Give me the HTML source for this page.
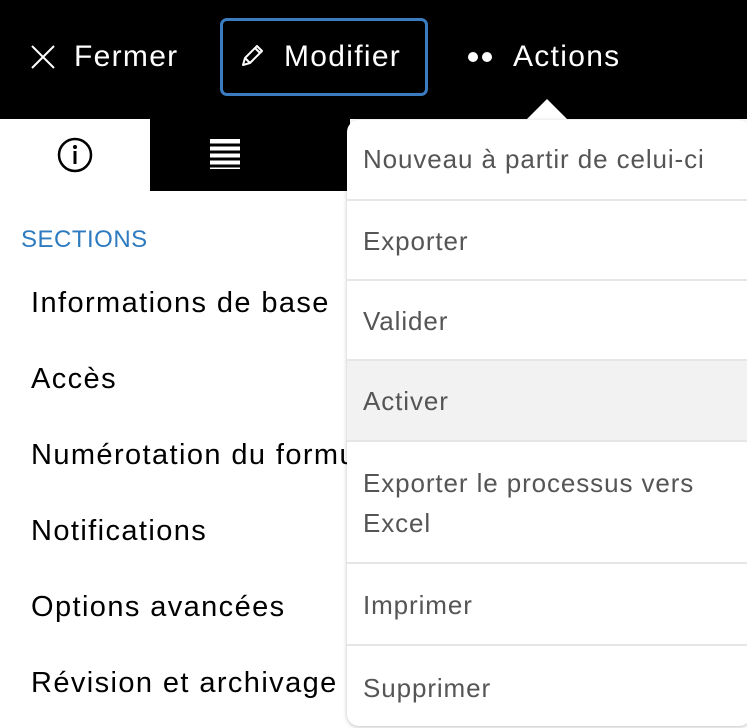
<!DOCTYPE html>
<html><head><meta charset="utf-8"><style>
*{margin:0;padding:0;box-sizing:border-box}
body{width:747px;height:728px;overflow:hidden;background:#fff;font-family:"Liberation Sans","DejaVu Sans",sans-serif;position:relative}
.hdr{position:absolute;left:0;top:0;width:747px;height:119px;background:#000}
.ht{position:absolute;color:#fff;font-size:30px;top:39px;line-height:36px;letter-spacing:1.3px}
.mod{position:absolute;left:220px;top:18px;width:208px;height:78px;border:3px solid #3b7cc0;border-radius:7px}
.tab1{position:absolute;left:0;top:119px;width:150px;height:72px;background:#fff}
.tab2{position:absolute;left:150px;top:119px;width:200px;height:72px;background:#000}
.sec{position:absolute;left:21px;top:226px;color:#2e7bbf;font-size:24px;letter-spacing:0.5px}
.si{position:absolute;left:31px;font-size:29px;color:#000;white-space:nowrap;letter-spacing:1.4px}
.menu{position:absolute;left:347px;top:120px;width:404px;height:606px;background:#fff;border-radius:12px;box-shadow:0 1px 4px rgba(0,0,0,.25);overflow:hidden}
.mi{position:absolute;left:0;width:100%;border-bottom:2px solid #e6e6e6;color:#555;font-size:26px;padding-left:16px;line-height:40px;letter-spacing:0.9px}
.arrow{position:absolute;left:525px;top:99px;width:0;height:0;border-left:22px solid transparent;border-right:22px solid transparent;border-bottom:22px solid #fff}
</style></head><body>
<div class="hdr"></div>
<svg style="position:absolute;left:30px;top:44px" width="26" height="26" viewBox="0 0 26 26"><path d="M2 2L24 24M24 2L2 24" stroke="#fff" stroke-width="2"/></svg>
<div class="ht" style="left:74px">Fermer</div>
<div class="mod"></div>
<svg style="position:absolute;left:238px;top:42px" width="28" height="28" viewBox="0 0 28 28"><path d="M5 23L7 16L19 4L24 9L12 21Z M7 16L12 21 M17 6L22 11" fill="none" stroke="#fff" stroke-width="2" stroke-linejoin="round"/></svg>
<div class="ht" style="left:284px">Modifier</div>
<svg style="position:absolute;left:466px;top:50px" width="30" height="14"><circle cx="7" cy="7" r="5" fill="#fff"/><circle cx="21" cy="7" r="5" fill="#fff"/></svg>
<div class="ht" style="left:513px">Actions</div>
<div class="arrow"></div>
<div class="tab1"></div>
<div class="tab2"></div>
<svg style="position:absolute;left:57px;top:137px" width="36" height="36" viewBox="0 0 36 36"><circle cx="18" cy="18" r="16" fill="none" stroke="#000" stroke-width="2.5"/><circle cx="18" cy="10" r="2" fill="#000"/><rect x="16.5" y="14" width="3" height="13" fill="#000"/></svg>
<svg style="position:absolute;left:206px;top:136px" width="38" height="36" viewBox="0 0 38 36"><rect x="3" y="2" width="32" height="32" fill="#fff" stroke="#000" stroke-width="2"/><g stroke="#000" stroke-width="3"><line x1="3" y1="9" x2="35" y2="9"/><line x1="3" y1="16" x2="35" y2="16"/><line x1="3" y1="23" x2="35" y2="23"/><line x1="3" y1="30" x2="35" y2="30"/></g></svg>
<div class="sec">SECTIONS</div>
<div class="si" style="top:287px">Informations de base</div>
<div class="si" style="top:363px">Accès</div>
<div class="si" style="top:439px">Numérotation du formulaire</div>
<div class="si" style="top:515px">Notifications</div>
<div class="si" style="top:591px">Options avancées</div>
<div class="si" style="top:667px">Révision et archivage</div>
<div class="menu">
<div class="mi" style="top:0;height:81px;padding-top:19px">Nouveau à partir de celui-ci</div>
<div class="mi" style="top:81px;height:80px;padding-top:20px">Exporter</div>
<div class="mi" style="top:161px;height:80px;padding-top:20px">Valider</div>
<div class="mi" style="top:241px;height:81px;padding-top:20px;background:#f2f2f2">Activer</div>
<div class="mi" style="top:322px;height:122px;padding-top:21px">Exporter le processus vers<br>Excel</div>
<div class="mi" style="top:444px;height:82px;padding-top:21px">Imprimer</div>
<div class="mi" style="top:526px;height:82px;padding-top:22px;border:none">Supprimer</div>
</div>
</body></html>
